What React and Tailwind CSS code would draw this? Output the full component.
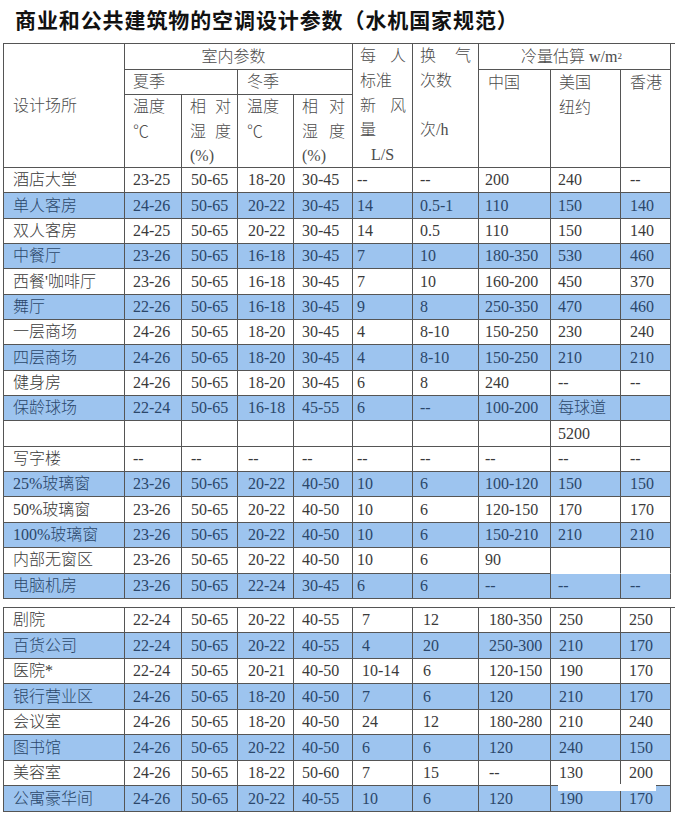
import React from "react";

const cols = "grid-cols-[121px_57px_56px_56px_59px_60px_66px_72px_70px_50px]";

// left padding for each column of the data rows
const pads1 = ["pl-[9px]", "pl-[8px]", "pl-[9px]", "pl-[10px]", "pl-[8px]", "pl-[4px]", "pl-[7px]", "pl-[6px]", "pl-[7px]", "pl-[9px]"];
const pads2 = ["pl-[9px]", "pl-[8px]", "pl-[9px]", "pl-[10px]", "pl-[8px]", "pl-[9px]", "pl-[10px]", "pl-[10px]", "pl-[8px]", "pl-[8px]"];

const rows1 = [
  ["酒店大堂", "23-25", "50-65", "18-20", "30-45", "--", "--", "200", "240", "--"],
  ["单人客房", "24-26", "50-65", "20-22", "30-45", "14", "0.5-1", "110", "150", "140"],
  ["双人客房", "24-25", "50-65", "20-22", "30-45", "14", "0.5", "110", "150", "140"],
  ["中餐厅", "23-26", "50-65", "16-18", "30-45", "7", "10", "180-350", "530", "460"],
  ["西餐'咖啡厅", "23-26", "50-65", "16-18", "30-45", "7", "10", "160-200", "450", "370"],
  ["舞厅", "22-26", "50-65", "16-18", "30-45", "9", "8", "250-350", "470", "460"],
  ["一层商场", "24-26", "50-65", "18-20", "30-45", "4", "8-10", "150-250", "230", "240"],
  ["四层商场", "24-26", "50-65", "18-20", "30-45", "4", "8-10", "150-250", "210", "210"],
  ["健身房", "24-26", "50-65", "18-20", "30-45", "6", "8", "240", "--", "--"],
  ["保龄球场", "22-24", "50-65", "16-18", "45-55", "6", "--", "100-200", "每球道", ""],
  ["", "", "", "", "", "", "", "", "5200", ""],
  ["写字楼", "--", "--", "--", "--", "--", "--", "--", "--", "--"],
  ["25%玻璃窗", "23-26", "50-65", "20-22", "40-50", "10", "6", "100-120", "150", "150"],
  ["50%玻璃窗", "23-26", "50-65", "20-22", "40-50", "10", "6", "120-150", "170", "170"],
  ["100%玻璃窗", "23-26", "50-65", "20-22", "40-50", "10", "6", "150-210", "210", "210"],
  ["内部无窗区", "23-26", "50-65", "20-22", "40-50", "10", "6", "90", "", ""],
  ["电脑机房", "23-26", "50-65", "22-24", "30-45", "6", "6", "--", "--", "--"],
];
const blue1 = [1, 3, 5, 7, 9, 12, 14, 16];

const rows2 = [
  ["剧院", "22-24", "50-65", "20-22", "40-55", "7", "12", "180-350", "250", "250"],
  ["百货公司", "22-24", "50-65", "20-22", "40-55", "4", "20", "250-300", "210", "170"],
  ["医院*", "22-24", "50-65", "20-21", "40-50", "10-14", "6", "120-150", "190", "170"],
  ["银行营业区", "24-26", "50-65", "18-20", "40-50", "7", "6", "120", "210", "170"],
  ["会议室", "24-26", "50-65", "18-20", "40-50", "24", "12", "180-280", "210", "240"],
  ["图书馆", "24-26", "50-65", "20-22", "40-50", "6", "6", "120", "240", "150"],
  ["美容室", "24-26", "50-65", "18-22", "50-60", "7", "15", "--", "130", "200"],
  ["公寓豪华间", "24-26", "50-65", "20-22", "40-55", "10", "6", "120", "190", "170"],
];
const blue2 = [1, 3, 5, 7];

function Cell({ text, pad, blue, noBottom }) {
  return (
    <div
      className={`flex items-center border-r border-[#555] ${noBottom ? "border-b border-b-transparent" : "border-b"} ${pad} ${
        blue ? "bg-[#9dc4ef] text-[#2b476a]" : "bg-white text-[#3a3a3a]"
      }`}
    >
      {text}
    </div>
  );
}

function DataRows({ rows, blue, pads }) {
  return rows.map((r, i) =>
    r.map((c, j) => (
      <Cell
        key={`${i}-${j}`}
        text={c}
        pad={pads[j]}
        blue={blue.includes(i)}
        noBottom={c === "" && i === 15 && j >= 8}
      />
    ))
  );
}

const hd = "border-r border-b border-[#555] text-[#4c4c4c]";

export default function App() {
  return (
    <div className="relative w-[675px] h-[818px] bg-white overflow-hidden">
      {/* Title */}
      <h1 className="pl-[15px] pt-[6px] leading-[26px] text-[21px] tracking-[0.9px] font-bold text-[#111] font-['Noto_Sans_CJK_SC',sans-serif]">
        商业和公共建筑物的空调设计参数（水机国家规范）
      </h1>

      <div className="ml-[3px] mt-[11px] text-[16px] leading-[20px] font-light font-['Liberation_Serif','Noto_Sans_CJK_SC',serif]">
        {/* Header + first block */}
        <div className={`grid ${cols} grid-rows-[26px_25px_73px_repeat(17,25.35px)] border-l border-t border-[#555]`}>
          <div className={`${hd} col-start-1 row-start-1 row-span-3 flex items-center pl-[9px]`}>设计场所</div>
          <div className={`${hd} col-start-2 col-span-4 row-start-1 flex items-center justify-center pr-[10px]`}>室内参数</div>
          <div className={`${hd} col-start-6 row-start-1 row-span-3 pl-[7px] pr-[6px] leading-[24.8px]`}>
            <div className="flex justify-between"><span>每</span><span>人</span></div>
            <div>标准</div>
            <div className="flex justify-between"><span>新</span><span>风</span></div>
            <div>量</div>
            <div className="pl-[11px]">L/S</div>
          </div>
          <div className={`${hd} col-start-7 row-start-1 row-span-3 pl-[7px] pr-[7px] leading-[24.8px]`}>
            <div className="flex justify-between"><span>换</span><span>气</span></div>
            <div>次数</div>
            <div>&nbsp;</div>
            <div>次/h</div>
          </div>
          <div className={`${hd} col-start-8 col-span-3 row-start-1 flex items-center justify-center pr-[6px]`}>
            <span>
              冷量估算 w/m<sup className="text-[9px] relative -top-[3px]">2</sup>
            </span>
          </div>
          <div className={`${hd} col-start-2 col-span-2 row-start-2 flex items-center pl-[8px]`}>夏季</div>
          <div className={`${hd} col-start-4 col-span-2 row-start-2 flex items-center pl-[9px]`}>冬季</div>
          <div className={`${hd} col-start-8 row-start-2 row-span-2 pl-[9px] leading-[25px]`}>中国</div>
          <div className={`${hd} col-start-9 row-start-2 row-span-2 pl-[8px] leading-[25px]`}>
            <div>美国</div>
            <div>纽约</div>
          </div>
          <div className={`${hd} col-start-10 row-start-2 row-span-2 pl-[9px] leading-[25px]`}>香港</div>
          <div className={`${hd} col-start-2 row-start-3 pl-[8px] leading-[24.5px]`}>
            <div>温度</div>
            <div>℃</div>
          </div>
          <div className={`${hd} col-start-3 row-start-3 pl-[8px] pr-[6px] leading-[24.5px]`}>
            <div className="flex justify-between"><span>相</span><span>对</span></div>
            <div className="flex justify-between"><span>湿</span><span>度</span></div>
            <div>(%)</div>
          </div>
          <div className={`${hd} col-start-4 row-start-3 pl-[9px] leading-[24.5px]`}>
            <div>温度</div>
            <div>℃</div>
          </div>
          <div className={`${hd} col-start-5 row-start-3 pl-[8px] pr-[7px] leading-[24.5px]`}>
            <div className="flex justify-between"><span>相</span><span>对</span></div>
            <div className="flex justify-between"><span>湿</span><span>度</span></div>
            <div>(%)</div>
          </div>

          <DataRows rows={rows1} blue={blue1} pads={pads1} />
        </div>

        {/* Second block */}
        <div className={`mt-[8px] grid ${cols} grid-rows-[repeat(8,25.5px)] border-l border-t border-[#555]`}>
          <DataRows rows={rows2} blue={blue2} pads={pads2} />
        </div>
      </div>

      {/* white patch over the last row, as in the scan */}
      <div className="absolute left-[558px] top-[784px] w-[98px] h-[7px] bg-white" />
    </div>
  );
}
